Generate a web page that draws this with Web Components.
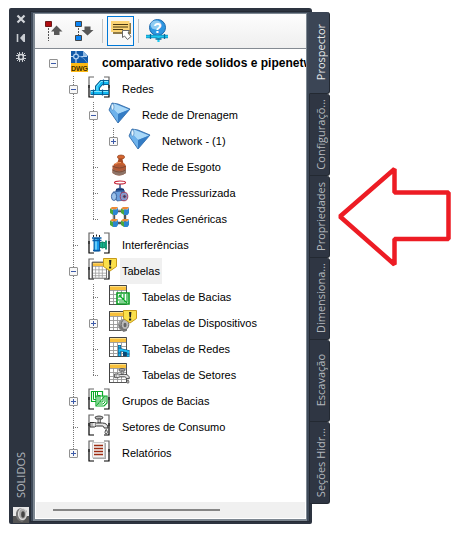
<!DOCTYPE html>
<html lang="pt-BR">
<head>
<meta charset="utf-8">
<meta name="viewport" content="width=device-width, initial-scale=1">
<title>SOLIDOS</title>
<style>
  body {
    margin: 0;
    background: #fff;
    font-family: "Liberation Sans", Arial, sans-serif;
    font-size: 11px;
    color: #000;
  }
</style>
</head>
<body>
<app-page>
  <tool-palette caption="SOLIDOS">
    <palette-toolbar slot="toolbar"></palette-toolbar>
    <tree-item label="comparativo rede solidos e pipenetwork" icon="dwg" state="open" root>
      <tree-item label="Redes" icon="pipes" state="open">
        <tree-item label="Rede de Drenagem" icon="gem" state="open">
          <tree-item label="Network - (1)" icon="gem" state="closed" last></tree-item>
        </tree-item>
        <tree-item label="Rede de Esgoto" icon="manhole"></tree-item>
        <tree-item label="Rede Pressurizada" icon="valve"></tree-item>
        <tree-item label="Redes Genéricas" icon="cubes" last></tree-item>
      </tree-item>
      <tree-item label="Interferências" icon="crossing"></tree-item>
      <tree-item label="Tabelas" icon="tables" state="open" selected>
        <tree-item label="Tabelas de Bacias" icon="tableBasin"></tree-item>
        <tree-item label="Tabelas de Dispositivos" icon="tableDevice" state="closed"></tree-item>
        <tree-item label="Tabelas de Redes" icon="tablePipes"></tree-item>
        <tree-item label="Tabelas de Setores" icon="tableTap" last></tree-item>
      </tree-item>
      <tree-item label="Grupos de Bacias" icon="basins" state="closed"></tree-item>
      <tree-item label="Setores de Consumo" icon="tap"></tree-item>
      <tree-item label="Relatórios" icon="report" state="closed" last></tree-item>
    </tree-item>
    <palette-tabs slot="tabs"></palette-tabs>
  </tool-palette>
  <callout-arrow slot="note"></callout-arrow>
</app-page>

<script>
// shared icon parts
const bracket = `
  <path d="M6 1H1V12M16 1h5v11" fill="none" stroke="#666" stroke-width="1.2"/>
  <path d="M1 9v12h5M21 9v12h-5" fill="none" stroke="#000" stroke-width="1.2"/>`;

const grid = `
  <path d="M1.5 1.5h17v19h-17z" fill="#fff" stroke="#555"/>
  <path d="M2 2h16v4H2z" fill="#f8c03c"/><path d="M2 2h16v1H2z" fill="#fde08a"/>
  <path d="M2 6.5h16M2 10.5h16M2 14.5h16M2 17.5h16M5.5 6v14M9.5 6v14M13.5 6v14" stroke="#999" stroke-width=".9"/>
  <path d="M1.5 21V1.5h17" fill="none" stroke="#444"/>`;

const warning = `
  <path d="M15.5.5h13v8L22 13l-6.5-4.5z" fill="#fbe04a" stroke="#c79a1b"/>
  <path d="M21 2h2.4l-.5 5.4h-1.4zM21 8.4h2.2v2H21z" fill="#222"/>`;

const tapShape = `
  <path d="M7 3.2C9 1.6 13 1.6 15 3.2L14 5H8z" fill="#bbb" stroke="#333" stroke-width=".9"/>
  <path d="M10 5h2.4v4H10z" fill="#ddd" stroke="#444" stroke-width=".8"/>
  <path d="M2 8.5h4.5l2 .5h6c3.5 0 5.5 2 5.5 5h-4c0-1.3-.6-2-2-2H8.5L6.5 13H2z" fill="#e4e4e4" stroke="#333"/>
  <path d="M4 9v3.6M7.5 9v3.4" stroke="#777" stroke-width=".8"/>
  <path d="M18.2 15.4c1.6 2.2 1.5 4.4 0 4.4s-1.6-2.2 0-4.4z" fill="#fff" stroke="#333" stroke-width=".9"/>`;

const cube = (x, y) => `
  <g transform="translate(${x} ${y})">
    <path d="M0 1.500L2 0h6L6 2.500H3z" fill="#ee8a34"/>
    <path d="M0 1.500l3 1.500v5L0 6z" fill="#4aa83c"/>
    <path d="M3 2.500h3.500L8 .5V6L6.500 8H3z" fill="#2c86d0"/>
  </g>`;

const icons = {
  dwg: { w: 30, h: 26, body: `
    <path d="M3 1h12l5 5v8H3z" fill="#1259a8"/>
    <path d="M15 1l5 5h-5z" fill="#8db8e2"/>
    <path d="M8 1v3M8 9v4M3 6.5h3M11 6.5h8" stroke="#b7d3f0" stroke-width="1.2"/>
    <circle cx="8" cy="6.5" r="2.4" fill="#1259a8" stroke="#b7d3f0" stroke-width="1.2"/>
    <path d="M11 6q5 1 8.500 7" stroke="#5d96d2" fill="none"/>
    <path d="M3 13h17v9H3z" fill="#fdb913"/>
    <text x="11.500" y="20.500" text-anchor="middle" font-family="Liberation Sans" font-weight="bold" font-size="7" fill="#402c00">DWG</text>` },
  pipes: { w: 30, h: 26, body: bracket + `
    <path d="M2.500 16.500h18.500M9.500 15v-4l4-4.500H21" fill="none" stroke="#064a78" stroke-width="5"/>
    <path d="M3 16.500h17.500M9.500 16.500V11l4-4.500h7" fill="none" stroke="#12b8f2" stroke-width="3.400"/>
    <path d="M3 15.500h17M9 14v-3.500L13 5.500h7" fill="none" stroke="#83e9ff" stroke-width="1"/>
    <path d="M5.500 13.500v6M14.500 13.500v6M15.500 3.500v6" stroke="#075b95" stroke-width="1.2"/>` },
  gem: { w: 30, h: 26, body: `
    <path d="M4 1l6 1 12 5L10 21 1 8z" fill="#4b93d8" stroke="#28619e" stroke-width=".8"/>
    <path d="M6 1.500l15 6L10 12 4 6z" fill="#a9d8f8"/>
    <path d="M10 12l11.500-4.500L10 20.500z" fill="#347cc4"/>
    <path d="M1.500 8L4 5l6 7v8z" fill="#6eb2eb"/>
    <ellipse cx="4.500" cy="5" rx="1.500" ry="3" fill="#e5f5ff" stroke="#548bbd" stroke-width=".7"/>` },
  manhole: { w: 30, h: 26, body: `
    <path d="M10.500 5h4l1 5H9z" fill="#a94c26"/>
    <ellipse cx="13" cy="3" rx="3.600" ry="2" fill="#d5652f" stroke="#8c421f" stroke-width=".7"/>
    <path d="M6 10q5.500-4 11 0l1 3H5z" fill="#c8602f"/>
    <path d="M4.500 12q6.500-3 13.500 0v7q-7 5-13.500 0z" fill="#b35a37"/>
    <path d="M4.500 15q7 4 13.500 0v4q-7 5-13.500 0z" fill="#8d7468"/>
    <path d="M4.500 12q7 4 13.500 0M4.500 16q7 4 13 0" fill="none" stroke="#7a4630" stroke-width=".9"/>
    <path d="M7 10q3-2 6-1.500" stroke="#f29b63" fill="none"/>` },
  valve: { w: 30, h: 26, body: `
    <path d="M11 3h2v6h-2z" fill="#6a7fa8"/>
    <ellipse cx="12" cy="2.500" rx="5.500" ry="1.500" fill="#fff" stroke="#c42034" stroke-width="1.2"/>
    <path d="M8 10q4-4 8 0l1 5H8z" fill="#3767ac" stroke="#203e78" stroke-width=".7"/>
    <path d="M5 12l8-1 4 9-8 1z" fill="#6d9fdc" stroke="#28518e" stroke-width=".7"/>
    <ellipse cx="6" cy="16.500" rx="2.600" ry="4" fill="#9cc2ea" stroke="#28518e" stroke-width=".8"/>
    <ellipse cx="16" cy="16.500" rx="3.800" ry="4.300" fill="#7f9bd0" stroke="#a63d5d"/>
    <circle cx="16.500" cy="16.500" r="1.700" fill="#27406f" stroke="#d77282" stroke-width=".7"/>
    <path d="M8 9.500h8" stroke="#16366d" stroke-width="1.500"/>` },
  cubes: { w: 30, h: 26, body: `
    <path d="M6 5h11v12H6z" fill="none" stroke="#555" stroke-width="2.400"/>
    <path d="M6 4.500h11M5.500 6v11" stroke="#999" stroke-width=".8"/>
    ${cube(2, 1)}${cube(13, 1)}${cube(2, 13)}${cube(13, 13)}` },
  crossing: { w: 30, h: 26, body: bracket + `
    <path d="M12 10.500h5v5h-5z" fill="#1cc9a0" stroke="#08664e" stroke-width=".8"/>
    <path d="M14.500 9.500v7M18 8.500v9" stroke="#07966e" stroke-width="1.800"/>
    <path d="M6 6.500h5.500V19H6z" fill="#169bed" stroke="#064f91" stroke-width=".9"/>
    <path d="M8 7v11" stroke="#81dcff" stroke-width="1.500"/>
    <path d="M4 6h9.500M4.500 8.500h9M5 18.500h7.500" stroke="#075ba6" stroke-width="1.300"/>
    <path d="M5 4h1M8 3.500h1M11 4h1" stroke="#222" stroke-width="2"/>` },
  tables: { w: 30, h: 26, body: bracket + `
    <g transform="translate(3 3) scale(.84)">${grid}</g>` + warning },
  tableBasin: { w: 30, h: 26, body: grid + `
    <path d="M9 9h12v11H9z" fill="#fff" stroke="#0a9b22" stroke-width="1.600"/>
    <path d="M11 11l8 8M13 10v3h-3M16 10v6h-6M19 10v8h-8" fill="none" stroke="#0aa928" stroke-width="1.200"/>` },
  tableDevice: { w: 30, h: 26, body: grid + `
    <ellipse cx="15" cy="15" rx="5" ry="6" fill="#999"/>
    <path d="M10.500 14l1 4 4 4 3-1z" fill="#777"/>
    <ellipse cx="17" cy="14.500" rx="3.800" ry="5" fill="#b9b9b9" stroke="#6c6c6c"/>
    <ellipse cx="17" cy="15" rx="1.500" ry="2.300" fill="#666"/>` + warning },
  tablePipes: { w: 30, h: 26, body: grid + `
    <path d="M11.500 9v11.500M11.500 13.500l8.500 2M20 14v7M16.500 15v5" fill="none" stroke="#064a78" stroke-width="3"/>
    <path d="M11.500 9.500v10.500M11.500 13.500l8.500 2M20 14.500v6" fill="none" stroke="#20bcf2" stroke-width="2"/>
    <path d="M10 12h3M10 17h3M18.500 18h3" stroke="#075b95"/>` },
  tableTap: { w: 30, h: 26, body: grid + `<g transform="translate(5 5) scale(.82)">${tapShape}</g>` },
  basins: { w: 30, h: 26, body: bracket + `
    <path d="M3.500 3.500h11v10h-11z" fill="#fff" stroke="#0aa928" stroke-width="1.200"/>
    <path d="M5.500 4v7.500h5M7.500 4v5.500h4M9.500 4v3.500h3" fill="none" stroke="#0aa928"/>
    <path d="M8 8h11v7l-3 3H8z" fill="#fff" stroke="#0aa928" stroke-width="1.200"/>
    <path d="M10 8v8h5l2-2V8M12 8v6h2.500l.5-1V8M8.500 17.500l8-9" fill="none" stroke="#0aa928"/>` },
  tap: { w: 30, h: 26, body: bracket + tapShape },
  report: { w: 30, h: 26, body: bracket + `
    <path d="M5 3h13v16H5z" fill="#aaa"/><path d="M4.500 2.500h12v15h-12z" fill="#f4f4f4" stroke="#c8c8c8"/>
    <path d="M6 5.500h9M6 8.500h9M6 11.500h9M6 14.500h9" stroke="#9c2b10" stroke-width="1.300"/>` },

  // toolbar
  collapse: { w: 18, h: 22, body: `
    <path d="M.5 1.500h6v5h-6z" fill="#b00c10" stroke="#6b1a1a"/>
    <path d="M3.500 8v13" stroke="#555" stroke-dasharray="2 1"/>
    <path d="M11.500 5.500l6 6h-3V15H9v-3.500H6z" fill="#585858"/>` },
  expand: { w: 20, h: 22, body: `
    <path d="M.5 1.500h6v5h-6zM.5 15.500h6v5h-6z" fill="#0a84f4" stroke="#444"/>
    <path d="M3.500 8v7" stroke="#555" stroke-dasharray="2 1"/>
    <path d="M9.500 6.500h6V10h3l-6 5.500-6-5.500h3z" fill="#585858"/>` },
  tooltip: { w: 22, h: 24, body: `
    <path d="M3 4h18v11H3z" fill="#8f7a48"/>
    <path d="M1 2h18.500v11H1z" fill="#fbd475"/>
    <path d="M3 5.500h15M3 8h15M3 10.500h10" stroke="#4a3a12" stroke-width="1.200"/>
    <path d="M12.500 11.500h7L18 14l3 3.500-3.500 3-3-3.500-2 1.500z" fill="#fff" stroke="#666"/>` },
  help: { w: 22, h: 24, body: `
    <circle cx="11.500" cy="8.500" r="8" fill="#2e96e0" stroke="#1a67ac"/>
    <ellipse cx="10" cy="6" rx="5.500" ry="4.500" fill="#8fcbf2"/>
    <text x="11.500" y="14" text-anchor="middle" font-family="Liberation Sans" font-weight="bold" font-size="14" fill="#fff">?</text>
    <path d="M0 17.500h22" stroke="#0b7fae" stroke-width="3.400"/>
    <path d="M0 17.500h22M12.500 18v5" stroke="#20c8f0" stroke-width="2.200"/>
    <path d="M4.500 15v5M18.500 15v5M9.500 20h6" stroke="#086d9d" stroke-width="1.300"/>` },

  // title bar
  close: { w: 10, h: 10, body: `<path d="M1.500 1.500l7 7M8.500 1.500l-7 7" stroke="#d2d5d9" stroke-width="2.200"/>` },
  pin: { w: 10, h: 10, body: `<path d="M1.500 1v8" stroke="#c8ccd1" stroke-width="1.600"/><path d="M9 1v8H7.500L4 5l3.500-4z" fill="#c8ccd1"/>` },
  gear: { w: 10, h: 10, body: `
    <path d="M3.500 0v10M6.500 0v10M0 3.500h10M0 6.500h10M1 1l8 8M9 1L1 9" stroke="#c8ccd1" stroke-width="1"/>
    <circle cx="5" cy="5" r="2.400" fill="#2d3440" stroke="#d2d5d9" stroke-width="1.500"/>` },
  logo: { w: 16, h: 16, body: `
    <path d="M0 0h16v16H0z" fill="#e8e8e8"/><path d="M0 9h16v7H0z" fill="#555"/>
    <path d="M3 6q1-5 6-5l5 3q1 8-5 11-7-2-6-9z" fill="#777"/>
    <ellipse cx="9.500" cy="7" rx="4" ry="5.500" fill="#aaa" stroke="#ddd" stroke-width="1.200"/>
    <ellipse cx="10" cy="7.500" rx="1.800" ry="3.200" fill="#444"/>` }
};

const svg = name => {
  const { w, h, body } = icons[name];
  return `<svg width="${w}" height="${h}" viewBox="0 0 ${w} ${h}" aria-hidden="true">${body}</svg>`;
};

class AppPage extends HTMLElement {
  constructor() {
    super();
    this.attachShadow({ mode: 'open' }).innerHTML = `
      <style>
        :host {
          display: grid;
          grid-template-columns: minmax(0, 1fr) auto;
          column-gap: 7px;
          box-sizing: border-box;
          min-height: 100vh;
          padding: 8px 8px 15px 9px;
        }
      </style>
      <slot></slot>
      <slot name="note"></slot>`;
  }
}

class ToolPalette extends HTMLElement {
  connectedCallback() {
    const caption = this.getAttribute('caption');
    this.attachShadow({ mode: 'open' }).innerHTML = `
      <style>
        :host {
          display: flex;
          align-items: stretch;
        }
        .frame {
          flex: 1;
          min-width: 0;
          display: flex;
          background: #2d3440;
          border-radius: 2px 3px 2px 2px;
        }
        .title {
          width: 22px;
          display: flex;
          flex-direction: column;
          align-items: center;
          gap: 9px;
          padding: 6px 0 1px 1px;
          box-sizing: border-box;
        }
        .title button {
          display: flex;
          padding: 0;
          border: 0;
          background: none;
        }
        .title h1 {
          margin: auto 0 0;
          writing-mode: vertical-rl;
          transform: rotate(180deg);
          font: 11px/16px "Open Sans", sans-serif;
          color: #b4b8be;
        }
        .title svg {
          display: block;
        }
        .content {
          flex: 1;
          min-width: 0;
          display: flex;
          flex-direction: column;
          margin: 4px 3px 3px 0;
          border: 2px solid #3f4a59;
          border-width: 1px 2px 0 2px;
          outline: 1px solid #252b35;
        }
        .view {
          flex: 1;
          display: flex;
          flex-direction: column;
          border: solid #7d8791;
          border-width: 1px 1px 2px 2px;
          background: #fff;
        }
        .tree {
          flex: 1;
          overflow: hidden;
          padding: 1px 1px 0 8px;
        }
        .scroll {
          height: 16px;
          margin: 0 1px 1px;
          padding: 0 85px 0 17px;
          display: flex;
          align-items: center;
          background: #f0f0f0;
        }
        .thumb {
          flex: 1;
          height: 2px;
          background: #858585;
        }
      </style>
      <section class="frame">
        <header class="title">
          <button aria-label="Fechar">${svg('close')}</button>
          <button aria-label="Ocultar">${svg('pin')}</button>
          <button aria-label="Propriedades da paleta">${svg('gear')}</button>
          <h1>${caption}</h1>
          ${svg('logo')}
        </header>
        <div class="content">
          <div class="view">
            <slot name="toolbar"></slot>
            <div class="tree" role="tree"><slot></slot></div>
            <div class="scroll"><div class="thumb"></div></div>
          </div>
        </div>
      </section>
      <slot name="tabs"></slot>`;
  }
}

class PaletteToolbar extends HTMLElement {
  constructor() {
    super();
    this.attachShadow({ mode: 'open' }).innerHTML = `
      <style>
        :host {
          display: flex;
          align-items: center;
          gap: 4px;
          height: 34px;
          padding-left: 5px;
          border-bottom: 1px solid #848a92;
          background: linear-gradient(#fdfdfd, #efefef);
        }
        button {
          width: 27px;
          height: 30px;
          display: flex;
          align-items: center;
          justify-content: center;
          box-sizing: border-box;
          padding: 0;
          border: 1px solid transparent;
          background: none;
        }
        button[aria-pressed="true"] {
          border-color: #0078d7;
          background: #f7f7f7;
        }
        i {
          width: 1px;
          height: 24px;
          background: #c4c4c4;
        }
      </style>
      <button aria-label="Recolher">${svg('collapse')}</button>
      <button aria-label="Expandir">${svg('expand')}</button>
      <i></i>
      <button aria-label="Dicas" aria-pressed="true">${svg('tooltip')}</button>
      <i></i>
      <button aria-label="Ajuda">${svg('help')}</button>`;
  }
}

class TreeItem extends HTMLElement {
  connectedCallback() {
    if (this.shadowRoot) return;
    const state = this.getAttribute('state');
    this.setAttribute('role', 'treeitem');
    this.attachShadow({ mode: 'open' }).innerHTML = `
      <style>
        :host {
          display: grid;
          grid-template-columns: 20px minmax(0, 1fr);
          --dots: repeating-linear-gradient(#777 0 1px, transparent 1px 2px);
        }
        .joint {
          height: 26px;
          display: grid;
          place-items: center;
          background: var(--dots) 10px 0 / 1px 100% no-repeat;
        }
        .rail {
          background: var(--dots) 10px 0 / 1px 100% no-repeat;
        }
        :host([last]) .joint {
          background-size: 1px 13px;
        }
        :host([last]) .rail,
        :host([root]) .rail,
        :host([root]) .joint {
          background: none;
        }
        .stub {
          width: 5px;
          height: 1px;
          margin-left: 5px;
          background: repeating-linear-gradient(90deg, #777 0 1px, transparent 1px 2px);
        }
        button {
          width: 9px;
          height: 9px;
          box-sizing: border-box;
          padding: 0;
          border: 1px solid #919191;
          border-radius: 1px;
          background:
            linear-gradient(#3c5aa8, #3c5aa8) center / 5px 1px no-repeat,
            #f8f8f8;
        }
        button.closed {
          background:
            linear-gradient(#3c5aa8, #3c5aa8) center / 5px 1px no-repeat,
            linear-gradient(#3c5aa8, #3c5aa8) center / 1px 5px no-repeat,
            #f8f8f8;
        }
        .row {
          display: flex;
          height: 26px;
          padding-left: 5px;
          gap: 2px;
        }
        .row svg {
          flex: none;
        }
        .label {
          padding: 0 2px;
          font-size: 11px;
          line-height: 26px;
          white-space: nowrap;
        }
        :host([root]) .row .label {
          font-size: 12px;
          font-weight: bold;
        }
        :host([selected]) .row .label {
          background: #f0f0f0;
        }
        .children[hidden] {
          display: none;
        }
      </style>
      <div class="joint">
        ${state ? `<button class="${state}" aria-label="Expandir ou recolher"></button>` : '<span class="stub"></span>'}
      </div>
      <div class="row">${svg(this.getAttribute('icon'))}<span class="label">${this.getAttribute('label')}</span></div>
      <div class="rail"></div>
      <div class="children" role="group"><slot></slot></div>`;

    const button = this.shadowRoot.querySelector('button');
    if (button) {
      button.addEventListener('click', () => this.toggle(button));
    }
  }

  toggle(button) {
    const closed = button.classList.toggle('closed');
    this.shadowRoot.querySelector('.children').hidden = closed;
  }
}

class PaletteTabs extends HTMLElement {
  constructor() {
    super();
    const tabs = ['Prospector', 'Configuraçõ...', 'Propriedades', 'Dimensiona...', 'Escavação', 'Seções Hidr...'];
    this.attachShadow({ mode: 'open' }).innerHTML = `
      <style>
        :host {
          display: flex;
          flex-direction: column;
          align-self: flex-start;
          margin: 4px 0 0 -3px;
        }
        button {
          width: 21px;
          height: 82px;
          display: flex;
          align-items: center;
          justify-content: center;
          box-sizing: border-box;
          padding: 0 0 0 3px;
          border: solid #232932;
          border-width: 0 1px 1px 1px;
          border-radius: 0 3px 3px 0;
          background: #2f3643;
          color: #b4b8be;
        }
        button[aria-selected="true"] {
          border-left-color: #3b4555;
          background: #3b4555;
          color: #e6e8ea;
        }
        span {
          writing-mode: vertical-rl;
          transform: rotate(180deg);
          font: 11px/16px "Open Sans", sans-serif;
          white-space: nowrap;
        }
      </style>
      <div role="tablist">
        ${tabs.map((tab, i) => `<button role="tab" aria-selected="${i === 0}"><span>${tab}</span></button>`).join('')}
      </div>`;

    this.shadowRoot.querySelector('div').addEventListener('click', (e) => {
      const picked = e.target.closest('button');
      if (!picked) return;
      this.shadowRoot.querySelectorAll('button').forEach(b => b.setAttribute('aria-selected', b === picked));
    });
  }
}

class CalloutArrow extends HTMLElement {
  constructor() {
    super();
    this.attachShadow({ mode: 'open' }).innerHTML = `
      <style>
        :host {
          display: block;
          padding-top: 157px;
        }
        svg {
          display: block;
        }
      </style>
      <svg width="116" height="102" viewBox="0 0 116 102" aria-hidden="true">
        <path d="M3 51.500L57.500 4v23.500h54V74h-54v25.500z" fill="#fff" stroke="#ed1c24" stroke-width="4.500" stroke-linejoin="bevel"/>
      </svg>`;
  }
}

customElements.define('app-page', AppPage);
customElements.define('tool-palette', ToolPalette);
customElements.define('palette-toolbar', PaletteToolbar);
customElements.define('tree-item', TreeItem);
customElements.define('palette-tabs', PaletteTabs);
customElements.define('callout-arrow', CalloutArrow);
</script>
</body>
</html>
